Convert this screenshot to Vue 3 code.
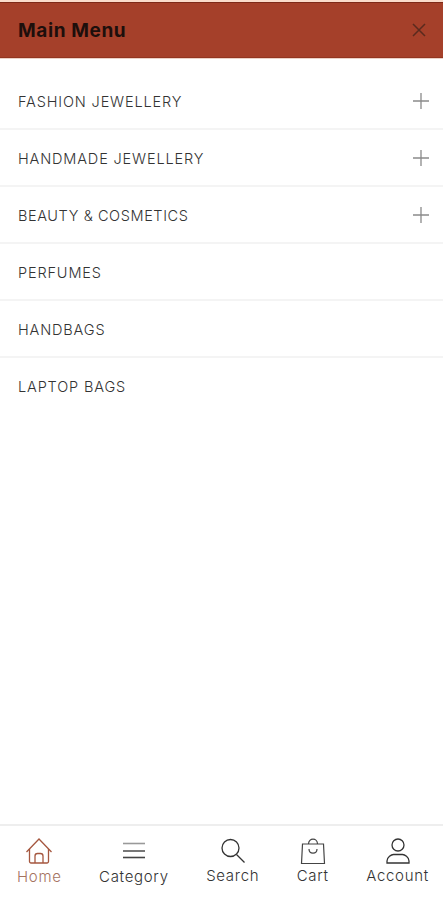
<script setup>
const items = [
  { label: 'FASHION JEWELLERY', more: true },
  { label: 'HANDMADE JEWELLERY', more: true },
  { label: 'BEAUTY & COSMETICS', more: true, tight: true },
  { label: 'PERFUMES' },
  { label: 'HANDBAGS' },
  { label: 'LAPTOP BAGS' }
]
</script>

<template>
  <div class="page">
    <header class="head">
      <h1>Main Menu</h1>
      <svg class="close" width="16" height="16" viewBox="0 0 16 16">
        <path d="M2 2l12 12M14 2L2 14" fill="none" stroke="#5a2a1e" stroke-width="1.500" />
      </svg>
    </header>

    <ul class="menu">
      <li v-for="item in items" :key="item.label" :class="{ tight: item.tight }">
        <span>{{ item.label }}</span>
        <svg v-if="item.more" width="16" height="16" viewBox="0 0 16 16">
          <path d="M8 0v16M0 8h16" fill="none" stroke="#8a8a8a" stroke-width="1.300" />
        </svg>
      </li>
    </ul>

    <nav class="tabs">
      <div class="tab active low">
        <svg width="26" height="26" viewBox="0 0 26 26" fill="none" stroke="#a5573f" stroke-width="1.300">
          <path d="M.5 14L13 1l12.500 13" />
          <path d="M3.500 11v12.500a1.500 1.500 0 0 0 1.500 1.500h16a1.500 1.500 0 0 0 1.500-1.500V11" />
          <path d="M9 25v-7a2.500 2.500 0 0 1 2.500-2.500h3A2.500 2.500 0 0 1 17 18v7" />
        </svg>
        <span>Home</span>
      </div>
      <div class="tab low">
        <svg width="26" height="26" viewBox="0 0 26 26" fill="none" stroke-width="1.600">
          <path d="M2 5.500h22" stroke="#999" />
          <path d="M2 13h22" stroke="#555" />
          <path d="M2 19.500h22" stroke="#444" />
        </svg>
        <span>Category</span>
      </div>
      <div class="tab">
        <svg width="26" height="26" viewBox="0 0 26 26" fill="none" stroke="#333" stroke-width="1.300">
          <circle cx="10.500" cy="10" r="8.500" />
          <path d="M16.500 16.500l8 8" />
        </svg>
        <span>Search</span>
      </div>
      <div class="tab">
        <svg width="26" height="26" viewBox="0 0 26 26" fill="none" stroke="#444" stroke-width="1.200">
          <path d="M2.500 6h21l1 19.500h-23z" />
          <path d="M8.500 6c0-6.500 9-6.500 9 0" />
          <path d="M9 11c0 5.500 8 5.500 8 0" />
        </svg>
        <span>Cart</span>
      </div>
      <div class="tab">
        <svg width="26" height="26" viewBox="0 0 26 26" fill="none" stroke="#333" stroke-width="1.300">
          <circle cx="13" cy="7" r="6" />
          <path d="M2 25v-2c0-4 4.500-6.500 6.500-6.500h9c2 0 6.500 2.500 6.500 6.500v2z" />
        </svg>
        <span>Account</span>
      </div>
    </nav>
  </div>
</template>

<style scoped>
.page {
  width: 443px;
  height: 900px;
  display: flex;
  flex-direction: column;
  background: #fff;
  font-family: Inter, "Liberation Sans", sans-serif;
  color: #333;
  overflow: hidden;
}

.head {
  height: 56px;
  margin-top: 2px;
  padding: 0 16px 0 18px;
  display: flex;
  align-items: center;
  justify-content: space-between;
  background: #a5402a;
  border-top: 1px solid #7e2a18;
  border-bottom: 1px solid #93351f;
  box-shadow: 0 -2px 0 #fbdccb, 0 1px 0 #ecd0c6;
  box-sizing: border-box;
}

.head h1 {
  margin: 0;
  font-size: 19px;
  font-weight: 700;
  letter-spacing: 0.6px;
  color: #1d0f0c;
}

.menu {
  list-style: none;
  margin: 0;
  padding: 15px 0 0;
  flex: 1;
}

.menu li {
  height: 57px;
  box-sizing: border-box;
  padding: 0 14px 0 18px;
  display: flex;
  align-items: center;
  justify-content: space-between;
  font-size: 14.500px;
  font-weight: 300;
  letter-spacing: 0.85px;
  color: #333;
  border-bottom: 2px solid #f4f4f4;
}

.menu li span {
  margin-top: 2px;
}

.menu li.tight {
  letter-spacing: 0.6px;
}

.menu li:last-child {
  border-bottom-color: transparent;
}

.tabs {
  height: 76px;
  padding: 12px 14px 0 17px;
  box-sizing: border-box;
  display: flex;
  justify-content: space-between;
  border-top: 2px solid #eee;
}

.tab {
  display: flex;
  flex-direction: column;
  align-items: center;
  gap: 3px;
  font-size: 15px;
  line-height: 17px;
  font-weight: 300;
  letter-spacing: 0.7px;
  color: #333;
}

.tab.active {
  color: #a5735f;
}

.tab.low span {
  margin-top: 1px;
}
</style>
